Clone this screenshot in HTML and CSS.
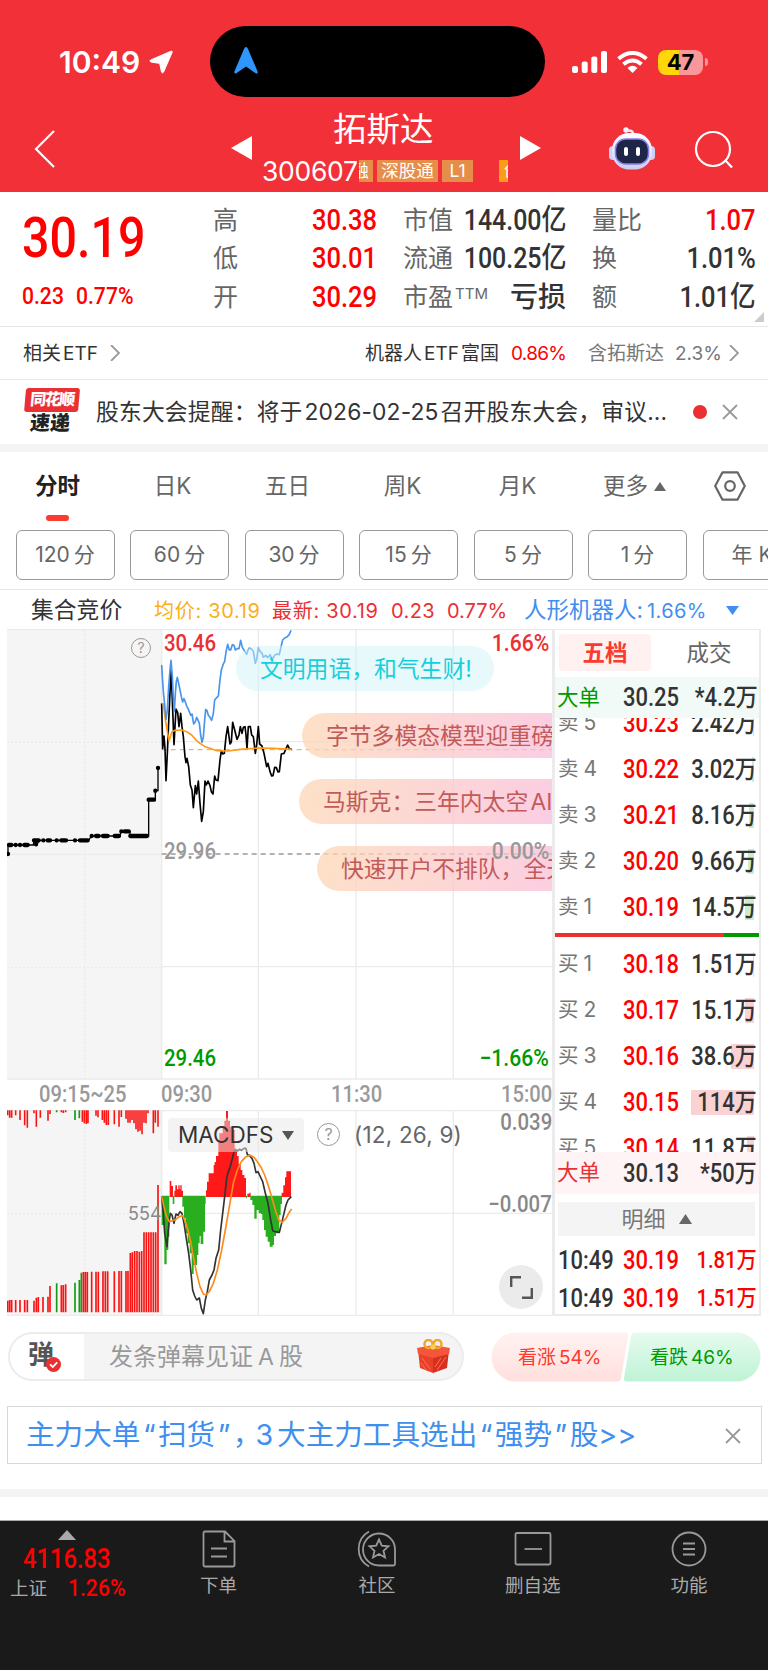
FILE: index.html
```
<!DOCTYPE html>
<html lang="zh-CN">

<head>
  <meta charset="UTF-8">
  <title>拓斯达 300607</title>
  <link rel="stylesheet" href="styles.css">
</head>

<body>
  <!-- Header -->
  <header class="header">
    <div class="status-bar">
      <div class="status-left">
        <span class="clock">10:49</span>
        <svg width="24" height="24" viewBox="0 0 24 24"><path d="M22 1.200Q23.600 .8 23.100 2.400L14.600 22Q13.500 23.800 12.500 22L10.900 14.400Q10.700 13.500 9.800 13.300L1.800 12Q0 11 1.600 10Z" fill="#fff" stroke="#fff"/></svg>
      </div>
      <div class="island">
        <svg width="24" height="27" viewBox="0 0 24 27"><path d="M12 0Q13.200 0 14 2L23.600 24.500Q24 27 22 26.400L12 19.500L2 26.400Q0 27 .4 24.500L10 2Q10.800 0 12 0Z" fill="#2f97fb"/></svg>
      </div>
      <div class="status-right">
        <svg width="35" height="22" viewBox="0 0 35 22" fill="#fff"><rect y="15" width="6" height="7" rx="2"/><rect x="9.700" y="10.500" width="6" height="11.500" rx="2"/><rect x="19.300" y="5.500" width="6" height="16.500" rx="2"/><rect x="29" width="6" height="22" rx="2"/></svg>
        <svg class="wifi" width="31" height="22" viewBox="0 0 31 22" fill="none" stroke="#fff" stroke-width="4"><path d="M1.500 7.800Q15.500 -3.800 29.500 7.800"/><path d="M6.500 13.300Q15.500 5.700 24.500 13.300"/><path d="M15.500 22L10.500 16.900Q15.500 12.800 20.500 16.900Z" fill="#fff" stroke="none"/></svg>
        <span class="battery">47</span>
        <span class="battery-nub"></span>
      </div>
    </div>

    <div class="title-bar">
      <svg class="back" width="22" height="38" viewBox="0 0 22 38" fill="none" stroke="#fff" stroke-width="2.200"><path d="M20 1L2 19L20 37"/></svg>
      <svg class="prev" width="21" height="24" viewBox="0 0 21 24"><path d="M21 0V24L0 12Z" fill="#fff"/></svg>
      <div class="stock-title">
        <div class="stock-name">拓斯达</div>
        <div class="stock-code">
          <span>300607</span>
          <div class="tag-strip">
            <i class="tag tag-cut"><b>融</b></i>
            <i class="tag tag-wide">深股通</i>
            <i class="tag tag-l1">L1</i>
            <i class="tag tag-next"><b>创</b></i>
          </div>
        </div>
      </div>
      <svg class="next" width="21" height="24" viewBox="0 0 21 24"><path d="M0 0V24L21 12Z" fill="#fff"/></svg>
      <svg class="robot" width="46" height="43" viewBox="0 0 46 43">
        <defs><linearGradient id="face" x1="0" y1="0" x2="0" y2="1"><stop offset="0" stop-color="#fff"/><stop offset="1" stop-color="#c9cdf2"/></linearGradient></defs>
        <path d="M24 7Q24 3 18.500 3.500" fill="none" stroke="#e4e6fa" stroke-width="2.500"/><circle cx="17" cy="3" r="2.700" fill="#f3f3ff"/>
        <rect x="0" y="19" width="8" height="14" rx="4" fill="#cdd0f4"/><rect x="38" y="19" width="8" height="14" rx="4" fill="#cdd0f4"/>
        <rect x="3" y="6" width="40" height="36.500" rx="17" fill="url(#face)"/>
        <rect x="6.500" y="12" width="33" height="25" rx="10" fill="#1f2547" stroke="#8a7be8" stroke-width="1.500"/>
        <rect x="15" y="20" width="4" height="9" rx="2" fill="#fff"/><rect x="27" y="20" width="4" height="9" rx="2" fill="#fff"/>
      </svg>
      <svg class="search" width="40" height="40" viewBox="0 0 40 40" fill="none" stroke="#fff" stroke-width="2.200"><circle cx="19" cy="19" r="17"/><path d="M31 30L38 37.500"/></svg>
    </div>
  </header>

  <!-- Quote summary -->
  <section class="quote">
    <div class="last">
      <div class="last-price num">30.19</div>
      <div class="last-change"><span class="num">0.23</span><span class="num">0.77%</span></div>
    </div>
    <dl class="stats stats-price">
      <div><dt>高</dt><dd class="num up">30.38</dd></div>
      <div><dt>低</dt><dd class="num up">30.01</dd></div>
      <div><dt>开</dt><dd class="num up">30.29</dd></div>
    </dl>
    <dl class="stats stats-cap">
      <div><dt>市值</dt><dd class="num">144.00亿</dd></div>
      <div><dt>流通</dt><dd class="num">100.25亿</dd></div>
      <div><dt>市盈<sup>TTM</sup></dt><dd class="loss">亏损</dd></div>
    </dl>
    <dl class="stats stats-vol">
      <div><dt>量比</dt><dd class="num up">1.07</dd></div>
      <div><dt>换</dt><dd class="num">1.01%</dd></div>
      <div><dt>额</dt><dd class="num">1.01亿</dd></div>
    </dl>
    <i class="corner"></i>
  </section>

  <section class="etf">
    <span>相关<em>ETF</em></span>
    <svg class="chev" width="10" height="16" viewBox="0 0 10 16"><path d="M1 0L9 8L1 16"/></svg>
    <span class="etf-name">机器人<em>ETF</em>富国</span>
    <span class="etf-pct">0.86%</span>
    <span class="etf-hold">含拓斯达</span>
    <span class="etf-weight">2.3%</span>
    <svg class="chev chev-end" width="10" height="16" viewBox="0 0 10 16"><path d="M1 0L9 8L1 16"/></svg>
  </section>

  <section class="news">
    <div class="news-logo">
      <span class="news-brand">同花顺</span>
      <span class="news-sub">速递</span>
    </div>
    <span class="news-text">股东大会提醒：将于<em>2026-02-25</em>召开股东大会，审议...</span>
    <i class="dot"></i>
    <svg class="close" width="16" height="16" viewBox="0 0 16 16"><path d="M1 1L15 15M15 1L1 15"/></svg>
  </section>

  <!-- Period tabs -->
  <nav class="tabs">
    <a class="active">分时</a>
    <a>日K</a>
    <a>五日</a>
    <a>周K</a>
    <a>月K</a>
    <a class="more">更多<svg width="12" height="9" viewBox="0 0 12 9"><path d="M6 0L12 9H0Z" fill="#666"/></svg></a>
    <svg class="hex" width="32" height="30" viewBox="0 0 32 30" fill="none" stroke="#666" stroke-width="2.200"><path d="M8.500 1.300H23.500L30.800 15L23.500 28.700H8.500L1.200 15Z" stroke-linejoin="round"/><circle cx="16" cy="15" r="4.800"/></svg>
  </nav>
  <div class="chips">
    <span>120<b>分</b></span>
    <span>60<b>分</b></span>
    <span>30<b>分</b></span>
    <span>15<b>分</b></span>
    <span>5<b>分</b></span>
    <span>1<b>分</b></span>
    <span>年 K</span>
  </div>

  <div class="legend">
    <span class="lg-auction">集合竞价</span>
    <span class="lg-avg">均价: 30.19</span>
    <span class="lg-last">最新: 30.19</span>
    <span class="lg-chg">0.23</span>
    <span class="lg-pct">0.77%</span>
    <span class="lg-sector">人形机器人:</span>
    <span class="lg-sector-pct">1.66%</span>
    <svg width="13" height="9" viewBox="0 0 13 9"><path d="M0 0H13L6.500 9Z" fill="#3f8ff0"/></svg>
  </div>

  <main class="board">
    <div class="charts">
      <!-- Intraday price -->
      <div class="price-chart">
        <svg width="545" height="451" viewBox="21 27 1635 1353">
          <rect x="21" y="27" width="464" height="1353" fill="#f5f5f5"/>
          <g fill="none" stroke="#ebebeb" stroke-width="4">
            <path d="M21 29H1656M21 1377H1656M485 27V1377M775 27V1377M1068 27V1377M1360 27V1377M485 365H1656M485 1040H1656"/>
            <path d="M21 703H485"/>
            <path d="M254 29V1377M21 367H485M21 1043H485" stroke-dasharray="6 6"/>
          </g>
          <path d="M485 702H1656" stroke="#999" stroke-width="4" stroke-dasharray="15 12"/>
          <path d="M485 389H1656" stroke="#dcb98a" stroke-width="4" stroke-dasharray="15 12"/>
          <path d="M24 702V675H100L102 661L110 675L118 661H265L275 648H360L363 634H390V648H446V539H466V512H474V444" fill="none" stroke="#000" stroke-width="4"/>
          <g fill="none" stroke="#000" stroke-width="13" stroke-linecap="round">
            <path d="M24 702h.1M27 675H34M47 675h.1M60 675h.1M73 675H83M108 673h.1M102 661H116M130 661h.1M143 661H150M170 661h.1M184 661H198M225 661h.1M240 661H263M275 648h.1M288 648H296M309 648H323M344 648H357M364 634h.1M374 634H386M391 648H441M446 539H462M466 512h.1M474 444h.1"/>
          </g>
          <g fill="none" stroke-width="5" stroke-linejoin="round">
            <path stroke="#000" d="M485 250L488 386L492 348L495 386L498 482L502 400L505 330L509 240L513 150L516 215L522 374L525 320L528 267L533 278L537 320L542 280L546 320L550 350L555 410L558 428L561 415L566 440L571 495L576 510L580 563L586 497L590 522L595 483L600 550L605 604L610 575L615 483L619 495L624 483L630 497L634 515L639 522L644 468L648 480L654 482L660 420L664 392L668 402L673 400L678 350L683 320L690 372L694 366L698 307L704 330L711 358L717 345L721 320L726 340L730 322L735 320L738 345L741 386L745 320L751 320L755 345L760 350L766 400L770 375L775 320L779 372L786 378L792 400L800 440L804 430L810 455L815 468L819 467L824 442L829 443L834 456L838 455L844 402L852 400L857 388L863 375L868 386L875 388"/>
            <path stroke="#ff9a14" d="M485 250L490 252L497 305L503 340L507 362L516 335L525 331L545 330L560 335L575 345L590 362L600 370L615 380L630 385L650 392L685 393L720 388L780 384L820 385L875 388"/>
            <path stroke="#4795ee" d="M485 135L487 170L490 215L494 255L498 298L502 270L506 200L510 150L513 121L517 170L520 235L523 275L526 220L529 185L532 172L536 190L540 210L544 230L548 246L552 236L556 246L560 258L564 266L568 275L572 286L576 282L581 312L586 305L590 292L594 300L598 310L602 345L606 367L610 352L614 300L617 268L621 272L625 286L630 292L635 301L640 280L644 240L650 233L655 228L660 180L664 150L670 132L674 124L678 96L683 73L688 90L692 90L697 74L702 76L706 90L712 86L717 86L722 61L727 82L733 92L740 103L744 90L748 84L755 88L760 94L766 130L770 118L775 83L780 94L786 100L790 112L797 106L803 113L810 104L817 118L824 106L830 102L838 104L842 85L848 60L854 54L862 50L868 43L873 31"/>
          </g>
        </svg>
        <div class="bullet bullet-blue">文明用语，和气生财!</div>
        <div class="bullet bullet-2">字节多模态模型迎重磅更新</div>
        <div class="bullet bullet-3">马斯克：三年内太空 AI 算力</div>
        <div class="bullet bullet-4">快速开户不排队，全天可办</div>
        <span class="help help-price">?</span>
        <span class="axis num y-max">30.46</span>
        <span class="axis num y-mid">29.96</span>
        <span class="axis num y-min">29.46</span>
        <span class="axis num r-max">1.66%</span>
        <span class="axis num r-mid">0.00%</span>
        <span class="axis num r-min">−1.66%</span>
      </div>

      <div class="times">
        <span class="num t-auction">09:15~25</span>
        <span class="num t-open">09:30</span>
        <span class="num t-noon">11:30</span>
        <span class="num t-close">15:00</span>
      </div>

      <!-- Auction volume + MACD -->
      <div class="macd-chart">
        <svg width="545" height="206" viewBox="21 120 1635 618">
          <rect x="21" y="120" width="464" height="618" fill="#f5f5f5"/>
          <g fill="none" stroke="#ebebeb" stroke-width="4">
            <path d="M21 122H1656M21 736H1656M485 120V736M775 120V736M1068 120V736M1360 120V736M485 430H1656"/>
            <path d="M254 122V736M21 432H485" stroke-dasharray="6 6"/>
          </g>
          <path stroke="#fb1313" stroke-width="4.800" d="M23 121V136M29 121V143M35 121V143M47 121V136M60 121V150M74 121V166M82 121V173M102 121V130M109 121V170M121 121V143M144 121V152M150 121V132M184 121V127M190 121V129M197 121V127M247 121V155M253 121V160M259 121V162M264 121V160M288 121V137M294 121V142M307 121V150M313 121V158M319 121V165M325 121V165M343 121V163M357 121V170M364 121V141M378 121V146M384 121V158M390 121V158M396 121V150M402 121V160M408 121V178M414 121V185M420 121V182M426 121V193M432 121V158M438 121V160M444 121V130M460 121V190M466 121V158M474 121V170"/>
          <path stroke="#fb1313" stroke-width="5" d="M23 727V692M29 727V690M35 727V690M47 727V690M60 727V690M74 727V690M82 727V690M102 727V692M109 727V683M115 727V681M129 727V681M144 727V680M150 727V648M184 727V646M190 727V645M197 727V643M250 727V606M256 727V606M262 727V606M275 727V605M288 727V605M295 727V605M309 727V604M316 727V604M323 727V604M343 727V604M357 727V603M364 727V603M378 727V603M384 727V603M391 727V549M397 727V547M404 727V543M411 727V543M418 727V545M425 727V543M432 727V487M439 727V487M446 727V487M453 727V487M460 727V487M467 727V487M474 727V345"/>
          <path stroke="#149a14" stroke-width="5" d="M170 121V127M225 121V150M238 121V145M170 727V640M225 727V638M238 727V630M244 727V608"/>
          <path fill="#ff1919" d="M509 381V333H514V348H519V381ZM523 381V362H526V346H531V358H535V346H539V358H541V346H545V362H549V381ZM618 381V361H621V335H626V310H641V285H644V276H648V258H655V215H658V190H668V170H673V152H678V123H684V152H690V170H697V180H704V240H711V258H716V282H722V300H727V315H733V324H738V381ZM742 381V371H748V368H752V381ZM845 381V368H850V346H855V322H859V304H873V381Z"/>
          <path fill="#29ae20" d="M485 377V465H493V583H500V540H505V500H508V377ZM518 377V402H523V377ZM547 377V410H552V445H557V490H563V520H569V550H575V612H581V585H591V555H595V520H599V498H602V522H610V485H615V402H617V377ZM738 377V384H741V377ZM751 377V390H757V405H763V446H770V420H776V430H783V432H787V450H792V480H797V500H803V515H809V530H818V525H822V498H828V490H838V435H842V402H846V377Z"/>
          <g fill="none" stroke-width="5" stroke-linejoin="round">
            <path stroke="#333" d="M485 380L490 430L494 490L501 530L505 480L508 450L511 430L516 435L522 460L528 432L534 436L540 425L546 430L552 460L558 500L566 550L572 600L578 660L584 678L590 690L598 684L604 715L610 731L616 690L622 665L628 630L636 615L642 600L648 565L656 540L662 480L668 430L674 380L680 325L684 308L690 292L696 270L702 245L706 238L712 243L718 238L724 241L732 235L738 235L742 254L748 256L756 265L762 280L768 308L774 305L780 318L788 335L796 370L804 400L812 450L818 482L826 485L838 487L846 455L852 430L858 405L864 390L874 380"/>
            <path stroke="#ff8a1c" d="M485 380L492 410L500 440L508 455L518 452L528 448L538 440L548 437L556 455L564 480L572 515L580 560L590 610L600 650L610 672L618 675L628 665L640 640L652 600L664 545L676 480L688 410L700 340L712 300L724 275L736 262L750 256L762 262L772 275L782 290L794 315L806 350L816 385L826 420L836 450L846 457L858 445L866 430L875 417"/>
          </g>
        </svg>
        <div class="indicator">MACDFS<svg width="12" height="9" viewBox="0 0 12 9"><path d="M0 0H12L6 9Z" fill="#555"/></svg></div>
        <span class="help help-macd">?</span>
        <span class="macd-args">(12, 26, 9)</span>
        <span class="volume">554</span>
        <span class="axis num m-max">0.039</span>
        <span class="axis num m-mid">−0.007</span>
        <div class="expand"><svg width="23" height="23" viewBox="0 0 23 23" fill="none" stroke="#555" stroke-width="2.400"><path d="M1.200 11V1.200H11M21.800 12V21.800H12"/></svg></div>
      </div>
    </div>

    <!-- Order book -->
    <aside class="book">
      <div class="book-tabs"><span class="on">五档</span><span>成交</span></div>
      <div class="level big big-sell"><span>大单</span><span class="num">30.25</span><span class="num qty">*4.2万</span></div>
      <div class="levels asks">
        <div class="level"><span>卖<i>5</i></span><span class="num up">30.23</span><span class="num qty">2.42万</span><u style="width:1px"></u></div>
        <div class="level"><span>卖<i>4</i></span><span class="num up">30.22</span><span class="num qty">3.02万</span><u style="width:2px"></u></div>
        <div class="level"><span>卖<i>3</i></span><span class="num up">30.21</span><span class="num qty">8.16万</span><u style="width:5px"></u></div>
        <div class="level"><span>卖<i>2</i></span><span class="num up">30.20</span><span class="num qty">9.66万</span><u style="width:6px"></u></div>
        <div class="level"><span>卖<i>1</i></span><span class="num up">30.19</span><span class="num qty">14.5万</span><u style="width:9px"></u></div>
      </div>
      <div class="ratio"><i style="width:83%"></i></div>
      <div class="levels bids">
        <div class="level"><span>买<i>1</i></span><span class="num up">30.18</span><span class="num qty">1.51万</span><u style="width:1px"></u></div>
        <div class="level"><span>买<i>2</i></span><span class="num up">30.17</span><span class="num qty">15.1万</span><u style="width:9px"></u></div>
        <div class="level"><span>买<i>3</i></span><span class="num up">30.16</span><span class="num qty">38.6万</span><u style="width:23px"></u></div>
        <div class="level"><span>买<i>4</i></span><span class="num up">30.15</span><span class="num qty">114万</span><u style="width:63px"></u></div>
        <div class="level"><span>买<i>5</i></span><span class="num up">30.14</span><span class="num qty">11.8万</span><u style="width:7px"></u></div>
      </div>
      <div class="level big big-buy"><span>大单</span><span class="num">30.13</span><span class="num qty">*50万</span></div>
      <div class="detail">明细<svg width="13" height="10" viewBox="0 0 13 10"><path d="M6.500 0L13 10H0Z" fill="#666"/></svg></div>
      <div class="level tick"><span class="num">10:49</span><span class="num up">30.19</span><span class="num qty up">1.81万</span></div>
      <div class="level tick"><span class="num">10:49</span><span class="num up">30.19</span><span class="num qty up">1.51万</span></div>
    </aside>
  </main>

  <!-- Comment bar -->
  <section class="comment">
    <div class="input">
      <div class="input-icon"><b>弹</b><svg width="15" height="15" viewBox="0 0 15 15"><circle cx="7.500" cy="7.500" r="7.500" fill="#e93030"/><path d="M4 7.300L6.800 10L11.200 5.300" fill="none" stroke="#fff" stroke-width="1.800"/></svg></div>
      <span class="placeholder">发条弹幕见证<em>A</em>股</span>
      <svg class="gift" width="33" height="34" viewBox="0 0 33 34">
        <path d="M1 11L16 16V34L3 29Z" fill="#e8402a"/><path d="M32 11L16 16V34L30 29Z" fill="#d8301f"/>
        <path d="M0 9L16 6L33 9L32 15L16 19L1 15Z" fill="#f4563c"/>
        <path d="M5 19L13 30M4 24L10 32M29 18L20 31M24 19L18 28" stroke="#ff7250" stroke-width="1"/>
        <circle cx="11.500" cy="5" r="4" fill="none" stroke="#f3a528" stroke-width="2.500"/><circle cx="20.500" cy="5" r="4" fill="none" stroke="#f3a528" stroke-width="2.500"/><circle cx="16" cy="8" r="2.500" fill="#ffd15c"/>
      </svg>
    </div>
    <div class="vote">
      <svg width="270" height="50" viewBox="0 0 270 50">
        <defs>
          <linearGradient id="rise" x1="0" y1="0" x2="0" y2="1"><stop offset="0" stop-color="#fff2f1"/><stop offset="1" stop-color="#ffe0dd"/></linearGradient>
          <linearGradient id="fall" x1="0" y1="0" x2="0" y2="1"><stop offset="0" stop-color="#e6fbef"/><stop offset="1" stop-color="#bff3d5"/></linearGradient>
        </defs>
        <path d="M25 .5H134Q138 .5 137 4.500L130 46Q129.500 49.500 125 49.500H25A24.500 24.500 0 0 1 25 .5Z" fill="url(#rise)"/>
        <path d="M245 .5H144Q141 .5 140 4.500L133 46Q132.500 49.500 136 49.500H245A24.500 24.500 0 0 0 245 .5Z" fill="url(#fall)"/>
      </svg>
      <span class="rise">看涨<em>54%</em></span>
      <span class="fall">看跌<em>46%</em></span>
    </div>
  </section>

  <section class="promo">
    <span>主力大单<q>“</q>扫货<q>”</q>，<em>3</em>大主力工具选出<q>“</q>强势<q>”</q>股&gt;&gt;</span>
    <svg class="close" width="16" height="16" viewBox="0 0 16 16"><path d="M1 1L15 15M15 1L1 15"/></svg>
  </section>
  <div class="band"></div>

  <!-- Bottom bar -->
  <footer class="bottom">
    <div class="index">
      <svg width="18" height="10" viewBox="0 0 18 10"><path d="M9 0L18 10H0Z" fill="#aaa"/></svg>
      <span class="num index-value">4116.83</span>
      <div class="index-row"><span>上证</span><span class="num">1.26%</span></div>
    </div>
    <a class="item i1">
      <svg width="34" height="38" viewBox="0 0 34 38"><path d="M3 1.500H23L32.500 11V35Q32.500 36.500 31 36.500H3Q1.500 36.500 1.500 35V3Q1.500 1.500 3 1.500ZM22.500 2V11.500H32M9 18.500H25M9 26.500H25"/></svg>
      <span>下单</span>
    </a>
    <a class="item i2">
      <svg width="40" height="38" viewBox="0 0 40 38"><path d="M12 1.500A20 20 0 0 0 12 36.500M38 19V34Q38 35.500 36.500 35.500H22A16 16 0 1 1 38 19ZM22 9.500L24.800 15.600L31.500 16.300L26.500 20.800L28 27.500L22 24L16 27.500L17.500 20.800L12.500 16.300L19.200 15.600Z"/></svg>
      <span>社区</span>
    </a>
    <a class="item i3">
      <svg width="38" height="38" viewBox="0 0 38 38"><rect x="1.500" y="3" width="35" height="31.500" rx="1.500"/><path d="M10.500 19H28"/></svg>
      <span>删自选</span>
    </a>
    <a class="item i4">
      <svg width="36" height="38" viewBox="0 0 36 38"><circle cx="18" cy="19" r="16.500"/><path d="M12 13.500H24M12 19H24M12 24.500H24"/></svg>
      <span>功能</span>
    </a>
  </footer>
</body>

</html>
```
FILE: styles.css
```
* {
  box-sizing: border-box;
}

body {
  margin: 0;
  width: 768px;
  height: 1670px;
  overflow: hidden;
  background: #fff;
  color: #333;
  font-family: Inter, "Noto Sans CJK SC", sans-serif;
  font-size: 20px;
  line-height: 1;
  white-space: nowrap;
}

svg {
  display: block;
  flex: none;
}

em, i, u {
  font-style: normal;
  text-decoration: none;
}

/* Narrow figures used for all prices */
.num {
  display: inline-block;
  flex: none;
  font-family: Roboto, "Noto Sans CJK SC", sans-serif;
  font-weight: 500;
  transform: scaleX(.88);
  transform-origin: left;
}

.up {
  color: #f00 !important;
}

/* Header */
.header {
  height: 192px;
  background: #f23038;
  color: #fff;
}

.status-bar {
  display: flex;
  height: 98px;
  padding-top: 26px;
}

.status-left {
  display: flex;
  align-items: center;
  gap: 8px;
  width: 210px;
  padding-left: 59px;
}

.clock {
  width: 82px;
  font-size: 30px;
  font-weight: 600;
}

.island {
  display: flex;
  align-items: center;
  width: 335px;
  height: 71px;
  padding: 0 0 3px 24px;
  border-radius: 36px;
  background: #000;
}

.status-right {
  display: flex;
  align-items: center;
  padding-left: 27px;
}

.wifi {
  margin: 0 10px;
}

.battery {
  width: 45px;
  height: 25px;
  border-radius: 8px;
  background: linear-gradient(90deg, #ffd60a 47%, #f9979b 47%);
  color: #000;
  font-size: 22px;
  font-weight: 700;
  line-height: 25px;
  text-align: center;
}

.battery-nub {
  width: 3px;
  height: 8px;
  margin-left: 2px;
  border-radius: 0 3px 3px 0;
  background: #f9979b;
}

.title-bar {
  display: flex;
  height: 94px;
}

.back { margin: 32px 0 0 34px; }
.prev { margin: 38px 0 0 175px; }
.next { margin: 38px 0 0 12px; }
.robot { margin: 29px 0 0 68px; }
.search { margin: 32px 0 0 39px; }

.stock-title {
  width: 246px;
  margin-left: 10px;
}

.stock-name {
  padding: 15px 0 0 71px;
  font-size: 33.500px;
}

.stock-code {
  display: flex;
  align-items: center;
  margin-top: 13px;
  height: 23px;
  font-size: 26.500px;
}

.stock-code > span {
  width: 97px;
  letter-spacing: -.3px;
}

.tag-strip {
  display: flex;
  gap: 4px;
}

.tag {
  height: 22px;
  background: #e68e49;
  font-size: 17.500px;
  line-height: 21px;
  text-align: center;
  overflow: hidden;
}

.tag b { font-weight: 400; }
.tag-cut { width: 14px; }
.tag-cut b { margin-left: -12px; }
.tag-wide { width: 61px; }
.tag-l1 { width: 31px; }

.tag-next {
  width: 9px;
  margin-left: 22px;
  background: #ff9c17;
}

.tag-next b { margin-left: 5px; }

/* Quote summary */
.quote {
  position: relative;
  display: flex;
  height: 135px;
  padding-top: 9px;
  border-bottom: 1px solid #e8e8e8;
}

.last {
  flex: none;
  width: 213px;
  padding: 10px 0 0 22px;
  color: #f00;
}

.last-price {
  font-size: 55px;
}

.last-change {
  display: flex;
  margin-top: 18px;
  font-size: 24px;
}

.last-change span:first-child { width: 54px; }

.stats {
  flex: none;
  width: 164px;
  margin: 0 26px 0 0;
}

.stats-cap {
  width: 163px;
}

.stats div {
  display: flex;
  justify-content: space-between;
  align-items: center;
  height: 38.500px;
}

.stats dt {
  color: #666;
  font-size: 25px;
}

.stats sup {
  font-size: 15px;
  vertical-align: 7px;
  line-height: 0;
  margin-left: 2px;
}

.stats dd {
  margin: 0;
  color: #333;
  font-size: 29px;
  transform-origin: right;
}

/* the wide market cap values may run under the label's empty side */
.stats-cap .num {
  margin: 0 0 0 -20px;
  transform: scaleX(.86);
}

.stats .loss {
  font-size: 28px;
  font-weight: 500;
}

.corner {
  position: absolute;
  right: 4px;
  bottom: 4px;
  border: 5px solid transparent;
  border-right-color: #ccc;
  border-bottom-color: #ccc;
}

/* Related ETF */
.etf {
  display: flex;
  align-items: center;
  height: 53px;
  padding-left: 23px;
  border-bottom: 1px solid #e8e8e8;
  font-size: 19px;
}

.etf > span:first-child { width: 87px; }
.etf em { margin: 0 2px; }

.chev {
  fill: none;
  stroke: #999;
  stroke-width: 1.800;
}

.etf-name { width: 146px; margin-left: 245px; }
.etf-pct { width: 77px; color: #f00; letter-spacing: -.7px; }
.etf-hold { width: 87px; color: #777; }
.etf-weight { width: 54px; color: #777; }

/* News strip */
.news {
  display: flex;
  align-items: center;
  height: 72px;
  padding: 0 0 1px 24px;
  border-bottom: 8px solid #f4f4f4;
}

.news-logo {
  width: 72px;
  font-weight: 900;
  transform: skewX(-5deg);
}

.news-brand,
.news-sub {
  display: block;
  width: 54px;
  height: 24px;
  font-size: 16px;
  line-height: 23px;
  letter-spacing: -1.500px;
  text-align: center;
}

.news-brand {
  border-radius: 3px;
  background: #ea3033;
  color: #fff;
}

.news-sub {
  color: #222;
  font-size: 20px;
  letter-spacing: 0;
}

.news-text {
  flex: none;
  width: 597px;
  padding-top: 1px;
  font-size: 22.800px;
  letter-spacing: .15px;
}

.news-text em { margin: 0 2px; }

.dot {
  width: 14px;
  height: 14px;
  margin-right: 15px;
  border-radius: 50%;
  background: #ea3033;
}

.close {
  fill: none;
  stroke: #999;
  stroke-width: 1.800;
}

/* Period tabs */
.tabs {
  display: flex;
  height: 78px;
  color: #666;
  font-size: 22.500px;
}

.tabs a {
  width: 115px;
  padding-top: 23px;
  text-align: center;
}

.tabs .active {
  color: #222;
  font-weight: 700;
}

.tabs .active::after {
  content: "";
  display: block;
  width: 23px;
  height: 6px;
  margin: 17px auto 0;
  border-radius: 3px;
  background: #fb3a30;
}

.tabs .more {
  display: flex;
  gap: 6px;
  width: 139px;
  padding-left: 28px;
}

.more svg { margin-top: 7px; }

.hex { margin-top: 19px; }

.chips {
  display: flex;
  gap: 15.500px;
  height: 60px;
  padding-left: 15.500px;
  border-bottom: 1px solid #e8e8e8;
  overflow: hidden;
}

.chips span {
  flex: none;
  width: 99px;
  height: 50px;
  border: 1px solid #999;
  border-radius: 6px;
  color: #666;
  font-size: 21px;
  line-height: 47px;
  text-align: center;
}

.chips b {
  margin-left: 4px;
  font-weight: 400;
}

/* Legend above the chart */
.legend {
  display: flex;
  align-items: center;
  height: 39px;
  padding: 2px 0 0 31px;
  font-size: 20px;
}

.lg-auction { width: 123px; font-size: 22.800px; }
.lg-avg { width: 118px; color: #faaf19; letter-spacing: .7px; }
.lg-last { width: 119px; color: #ea3033; letter-spacing: .7px; }
.lg-chg { width: 56px; color: #ea3033; letter-spacing: .4px; }
.lg-pct { width: 77px; color: #ea3033; }
.lg-sector { width: 123px; color: #3f8ff0; font-size: 22.500px; }
.lg-sector-pct { width: 79px; color: #3f8ff0; letter-spacing: .4px; }

/* Charts */
.board {
  display: flex;
  height: 687px;
  padding-left: 7px;
}

.charts {
  width: 548px;
  border-right: 3px solid #ebebeb;
}

.price-chart {
  position: relative;
  height: 451px;
  overflow: hidden;
}

.bullet {
  position: absolute;
  height: 45px;
  padding-left: 24px;
  border-radius: 23px;
  font-size: 22.800px;
  line-height: 46px;
  word-spacing: -4px;
}

.bullet-blue {
  left: 229px;
  top: 17px;
  width: 258px;
  background: rgba(208, 244, 248, .5);
  color: #16cfdc;
}

.bullet-2,
.bullet-3,
.bullet-4 {
  width: 340px;
  background: linear-gradient(100deg, rgba(253, 215, 180, .75), rgba(250, 188, 218, .75) 75%);
  color: #c35a5a;
}

.bullet-2 { left: 295px; top: 84px; }
.bullet-3 { left: 292px; top: 150px; }
.bullet-4 { left: 310px; top: 217px; }

.axis {
  position: absolute;
  color: #888;
  font-size: 24px;
  transform: scaleX(.85);
}

.y-max { left: 157px; top: 2px; color: #ea3033; }
.y-mid { left: 157px; top: 210px; color: #999; }
.y-min { left: 157px; top: 417px; color: #090; }
.r-max, .r-mid, .r-min { right: 3px; transform: scaleX(.88); transform-origin: right; }
.r-max { top: 2px; color: #ea3033; }
.r-mid { top: 210px; color: #999; }
.r-min { top: 417px; color: #090; }

.help {
  position: absolute;
  border: 1.500px solid #999;
  border-radius: 50%;
  color: #999;
  text-align: center;
}

.help-price {
  left: 124px;
  top: 9px;
  width: 20px;
  height: 20px;
  font-size: 14px;
  line-height: 17px;
}

.help-macd {
  left: 310px;
  top: 13px;
  width: 23px;
  height: 23px;
  font-size: 16px;
  line-height: 20px;
}

.times {
  display: flex;
  height: 30px;
  padding-top: 2px;
  color: #999;
  font-size: 24px;
}

.times .num { transform: scaleX(.84); }
.t-auction { width: 122px; margin-left: 32px; }
.t-open { width: 170px; }
.t-noon { width: 170px; }

.macd-chart {
  position: relative;
  height: 206px;
}

.indicator {
  position: absolute;
  left: 161px;
  top: 8px;
  display: flex;
  align-items: center;
  gap: 9px;
  width: 136px;
  height: 34px;
  padding-left: 10px;
  border-radius: 4px;
  background: rgba(232, 232, 232, .5);
  font-size: 22.500px;
}

.macd-args {
  position: absolute;
  left: 347px;
  top: 14px;
  color: #666;
  font-size: 22.500px;
  letter-spacing: .2px;
}

.volume {
  position: absolute;
  left: 121px;
  top: 95px;
  color: #888;
  font-size: 18px;
}

.m-max, .m-mid { right: 0; transform-origin: right; }
.m-max { top: 0; }
.m-mid { top: 82px; }

.expand {
  position: absolute;
  right: 9px;
  bottom: 7px;
  display: flex;
  align-items: center;
  justify-content: center;
  width: 44px;
  height: 44px;
  border-radius: 50%;
  background: #ebebeb;
}

/* Order book */
.book {
  width: 206px;
  border: 1px solid #ebebeb;
  border-width: 1px 2px 2px 0;
}

.book-tabs {
  display: flex;
  gap: 12px;
  height: 47px;
  padding: 4px;
  color: #666;
  font-size: 22.500px;
  line-height: 37px;
  text-align: center;
}

.book-tabs span {
  flex: none;
  width: 92px;
  height: 37px;
  border-radius: 4px;
}

.book-tabs .on {
  background: #fff1f0;
  color: #fb3a30;
  font-weight: 700;
}

.level {
  position: relative;
  display: flex;
  align-items: center;
  flex: none;
  height: 46px;
  padding-left: 3px;
  color: #333;
  font-size: 25px;
}

.level > span:first-child {
  flex: none;
  width: 65px;
}

.level > span:nth-child(2) {
  margin-right: -16px;
}

.levels .level > span:first-child {
  color: #777;
  font-size: 20.500px;
}

.level i {
  margin-left: 5px;
  font-size: 21px;
}

.level .qty {
  position: relative;
  z-index: 1;
  margin-left: auto;
  padding-right: 2px;
  transform-origin: right;
}

.level u {
  position: absolute;
  right: 5px;
  top: 11px;
  height: 25px;
}

.asks u { background: #cceccc; }
.bids u { background: #fbd2d4; }

.levels {
  display: flex;
  flex-direction: column;
  overflow: hidden;
}

.asks {
  justify-content: flex-end;
  height: 215px;
  padding-bottom: 3px;
}

.bids {
  height: 214px;
  padding-top: 3px;
}

.level.big { height: 41px; padding-left: 2px; }
.level.big > span:first-child { width: 66px; font-size: 21.500px; }
.big-sell { background: #f1faf6; }
.big-sell > span:first-child { color: #090; }
.level.big-buy { height: 42px; background: #fef4f5; }
.big-buy > span:first-child { color: #ea3033; }

.ratio {
  height: 4px;
  margin-bottom: 1px;
  background: #090;
}

.ratio i {
  display: block;
  height: 4px;
  background: #ea3033;
}

.detail {
  display: flex;
  align-items: center;
  justify-content: center;
  gap: 13px;
  width: 197px;
  height: 34px;
  margin: 8px 0 5px 3px;
  background: #f4f4f4;
  color: #777;
  font-size: 22px;
}

.level.tick { height: 38px; }
.tick .qty { font-size: 23px; }

/* Comment bar */
.comment {
  display: flex;
  padding: 16px 0 0 8px;
}

.input {
  display: flex;
  align-items: center;
  width: 456px;
  height: 49px;
  border: 2px solid #ececec;
  border-radius: 25px;
  background: #f4f4f4;
  overflow: hidden;
}

.input-icon {
  display: flex;
  flex: none;
  width: 74px;
  height: 45px;
  padding: 8px 0 0 18px;
  background: #fff;
  color: #555;
  font-size: 26px;
}

.input-icon svg { margin: 15px 0 0 -8px; }

.placeholder {
  flex: none;
  width: 333px;
  padding-left: 25px;
  color: #999;
  font-size: 24px;
}

.placeholder em { margin: 0 5px; font-size: 23px; }

.gift { margin-top: -1px; }

.vote {
  position: relative;
  margin-left: 27px;
  height: 50px;
  font-size: 19px;
}

.vote em { margin-left: 3px; }

.rise,
.fall {
  position: absolute;
  top: 16px;
  left: 27px;
  color: #fb3a30;
}

.fall {
  left: 159px;
  color: #090;
}

.promo {
  display: flex;
  align-items: center;
  width: 755px;
  height: 58px;
  margin: 24px 0 25px 7px;
  padding: 1px 0 0 18px;
  border: 1px solid #d8d8d8;
  color: #3f8ff0;
  font-size: 28.600px;
}

.promo span { width: 699px; }

.promo em { margin: 0 4px 0 -6px; }

.promo q {
  quotes: none;
  margin: 0 2.500px;
}

.promo q::before,
.promo q::after {
  content: none;
}

.band {
  height: 8px;
  background: #f4f4f4;
}

/* Bottom bar */
.bottom {
  display: flex;
  height: 150px;
  margin-top: 23px;
  border-top: 1px solid #aaa;
  background: #1a1a1a;
  color: #aaa;
}

.index {
  width: 200px;
  padding-left: 10px;
}

.index > svg { margin: 9px 0 0 48px; }

.index-value {
  margin: 6px 0 0 13px;
  color: #f00;
  font-size: 27px;
}

.index-row {
  display: flex;
  align-items: center;
  margin-top: 3px;
  font-size: 18.500px;
}

.index-row .num {
  margin-left: 21px;
  color: #f00;
  font-size: 24px;
}

.item {
  display: flex;
  flex-direction: column;
  align-items: center;
  gap: 8px;
  padding-top: 9px;
  font-size: 18.500px;
}

.item svg {
  fill: none;
  stroke: #999;
  stroke-width: 1.800;
}

.i2 { margin-left: 120px; }
.i3 { margin-left: 108px; }
.i4 { margin-left: 110px; }
```
